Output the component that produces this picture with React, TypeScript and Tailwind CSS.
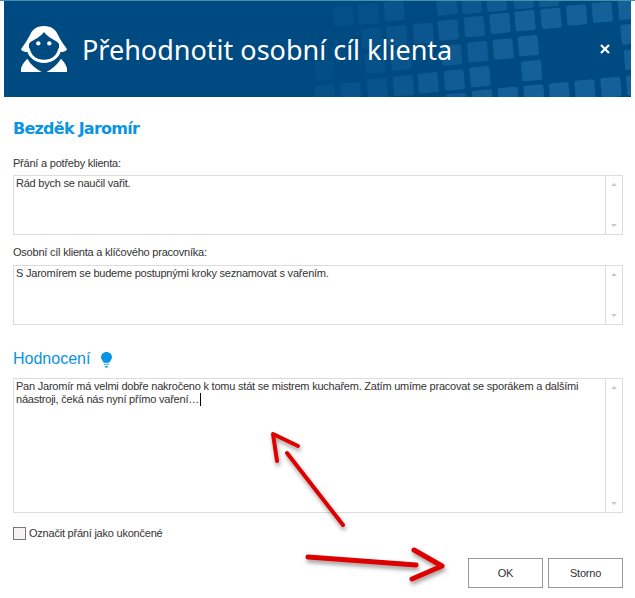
const squares: [number, number, number][] = [
  [85, 48, 0.25], [160, 42, 0.3], [238, 32, 0.45],
  [395, 15, 0.6], [470, 10, 0.6], [545, 4, 0.7], [625, -4, 0.7], [700, -10, 0.7],
  [170, 115, 0.3], [245, 107, 0.45], [325, 100, 0.55], [400, 90, 0.7], [478, 80, 0.8], [555, 70, 0.9], [630, 62, 1], [708, 55, 1], [785, 45, 1], [862, 37, 1], [940, 28, 1],
  [30, 210, 0.2], [180, 190, 0.35], [258, 180, 0.45], [410, 165, 0.7], [488, 155, 0.8], [565, 147, 0.9], [640, 137, 1], [948, 102, 1],
  [187, 265, 0.4], [265, 257, 0.6], [340, 248, 0.7], [418, 240, 0.8], [495, 230, 0.9], [650, 212, 1], [958, 178, 1],
  [30, 285, 0.3], [108, 278, 0.4], [425, 310, 0.8], [503, 300, 0.9], [580, 292, 1], [657, 285, 1], [733, 278, 1], [810, 270, 1], [888, 262, 1], [965, 255, 1],
]

function HeaderPattern() {
  return (
    <svg className="absolute right-0 top-0 h-[96px] w-[316px]" viewBox="0 3 948 288">
      {squares.map(([x, y, o], i) => (
        <rect
          key={i}
          x={x - 30}
          y={y - 30}
          width="60"
          height="60"
          rx="6"
          fill="#16639a"
          opacity={o * 0.9}
          transform={`rotate(-5 ${x} ${y})`}
        />
      ))}
    </svg>
  )
}

function GirlLogo() {
  return (
    <svg width="46" height="46" viewBox="63 78 138 138" className="shrink-0">
      <path fill="#fff" d="M132 78C108 78 96 90 90 105C83 118 72 135 63 148C68 156 78 158 87 154L87 132C94 120 118 116 132 96C146 116 170 120 177 132L177 154C186 158 196 156 201 148C192 135 180 118 174 105C168 90 156 78 132 78Z" />
      <path fill="none" stroke="#fff" strokeWidth="10" d="M84 146C90 172 110 184 132 184C154 184 174 172 180 146" />
      <circle cx="115" cy="130" r="6.5" fill="#fff" />
      <circle cx="148" cy="130" r="6.5" fill="#fff" />
      <path fill="#fff" d="M63 216L63 205C66 195 72 186 82 176C92 194 108 206 125 216Z" />
      <path fill="#fff" d="M201 216L201 205C198 195 193 186 183 176C172 194 156 206 140 216Z" />
    </svg>
  )
}

function Bulb() {
  return (
    <svg width="11" height="16" viewBox="0 0 11 16" className="mt-[1px] shrink-0">
      <path fill="#0a94e3" d="M5.5 0C2.3 0 0 2.3 0 5.2C0 7.6 1.8 8.6 2.8 10.8H8.2C9.2 8.6 11 7.6 11 5.2C11 2.3 8.7 0 5.5 0Z" />
      <rect x="2.8" y="11.6" width="5.4" height="1.5" fill="#6dbdee" />
      <rect x="3.8" y="14" width="3.4" height="1.6" fill="#3aa6e8" />
    </svg>
  )
}

function CloseIcon() {
  return (
    <svg width="10" height="10" viewBox="0 0 10 10" className="absolute right-[21px] top-[43px]">
      <path d="M1 1L9 9M9 1L1 9" stroke="#fff" strokeWidth="2.2" />
    </svg>
  )
}

function Memo({ className, children }: { className: string; children: React.ReactNode }) {
  return (
    <div className={`flex border border-[#dcdcdc] bg-white ${className}`}>
      <div className="min-w-0 flex-1 px-[2px] py-[1px] leading-[13px] text-[#333]">{children}</div>
      <div className="flex w-[17px] shrink-0 flex-col items-center justify-between border-l border-[#dcdcdc] py-[7px]">
        <span className="h-0 w-0 border-x-[3px] border-b-[3px] border-x-transparent border-b-[#c8c8c8]" />
        <span className="h-0 w-0 border-x-[3px] border-t-[3px] border-x-transparent border-t-[#c8c8c8]" />
      </div>
    </div>
  )
}

function Arrows() {
  return (
    <svg className="pointer-events-none absolute left-0 top-0 h-[598px] w-[635px]" viewBox="0 0 635 598">
      <defs>
        <filter id="arrow-shadow" x="-20%" y="-20%" width="140%" height="140%">
          <feDropShadow dx="1" dy="3" stdDeviation="2" floodColor="#000" floodOpacity="0.4" />
        </filter>
      </defs>
      <g filter="url(#arrow-shadow)" fill="none" stroke="#dd0000" strokeWidth="4" strokeLinecap="round" strokeLinejoin="round">
        <path d="M343 525L287 453" />
        <path d="M277 461L273 434L298 446" />
        <path d="M308 557L416 565" strokeWidth="5" />
        <path d="M414 550L442 566L412 579" strokeWidth="5" />
      </g>
    </svg>
  )
}

export default function App() {
  return (
    <div className="relative h-[598px] w-[635px] overflow-hidden bg-white font-['Liberation_Sans',sans-serif] text-[11px] tracking-[-0.22px] text-[#333]">
      <div className="h-px bg-[#3f93ab]" />
      <div className="relative mx-1 flex h-[96px] items-center overflow-hidden bg-[#004a82] pl-[17px] text-white">
        <HeaderPattern />
        <GirlLogo />
        <h1 className="relative ml-[15px] mt-[2px] font-['Noto_Sans',sans-serif] text-[27px] tracking-normal">Přehodnotit osobní cíl klienta</h1>
        <CloseIcon />
      </div>

      <div className="flex flex-col pl-[13px] pr-[12px]">
        <h2 className="mt-[22px] font-['DejaVu_Sans',sans-serif] text-[16px] leading-[20px] font-bold tracking-[-0.75px] text-[#0a94e3]">Bezděk Jaromír</h2>
        <label className="mt-[17px] leading-[14px]">Přání a potřeby klienta:</label>
        <Memo className="mt-[5px] h-[60px]">Rád bych se naučil vařit.</Memo>
        <label className="mt-[10px] leading-[14px]">Osobní cíl klienta a klíčového pracovníka:</label>
        <Memo className="mt-[6px] h-[60px]">S Jaromírem se budeme postupnými kroky seznamovat s vařením.</Memo>
        <div className="mt-[23px] flex h-[22px] items-center gap-[11px]">
          <h3 className="text-[16px] tracking-normal text-[#0a94e3]">Hodnocení</h3>
          <Bulb />
        </div>
        <Memo className="mt-[8px] h-[135px]">
          Pan Jaromír má velmi dobře nakročeno k tomu stát se mistrem kuchařem. Zatím umíme pracovat se sporákem a dalšími
          <br />
          náastroji, čeká nás nyní přímo vaření…
          <span className="ml-px inline-block h-[13px] w-px bg-black align-top" />
        </Memo>
        <label className="mt-[14px] flex h-[13px] items-center gap-[3px]">
          <span className="h-[13px] w-[13px] border border-[#777] bg-[#f4f4f4]" />
          Označit přání jako ukončené
        </label>
        <div className="mt-[18px] flex justify-end gap-[5px]">
          <button className="h-[30px] w-[75px] border border-[#999] bg-white">OK</button>
          <button className="h-[30px] w-[75px] border border-[#999] bg-white">Storno</button>
        </div>
      </div>
      <Arrows />
    </div>
  )
}
